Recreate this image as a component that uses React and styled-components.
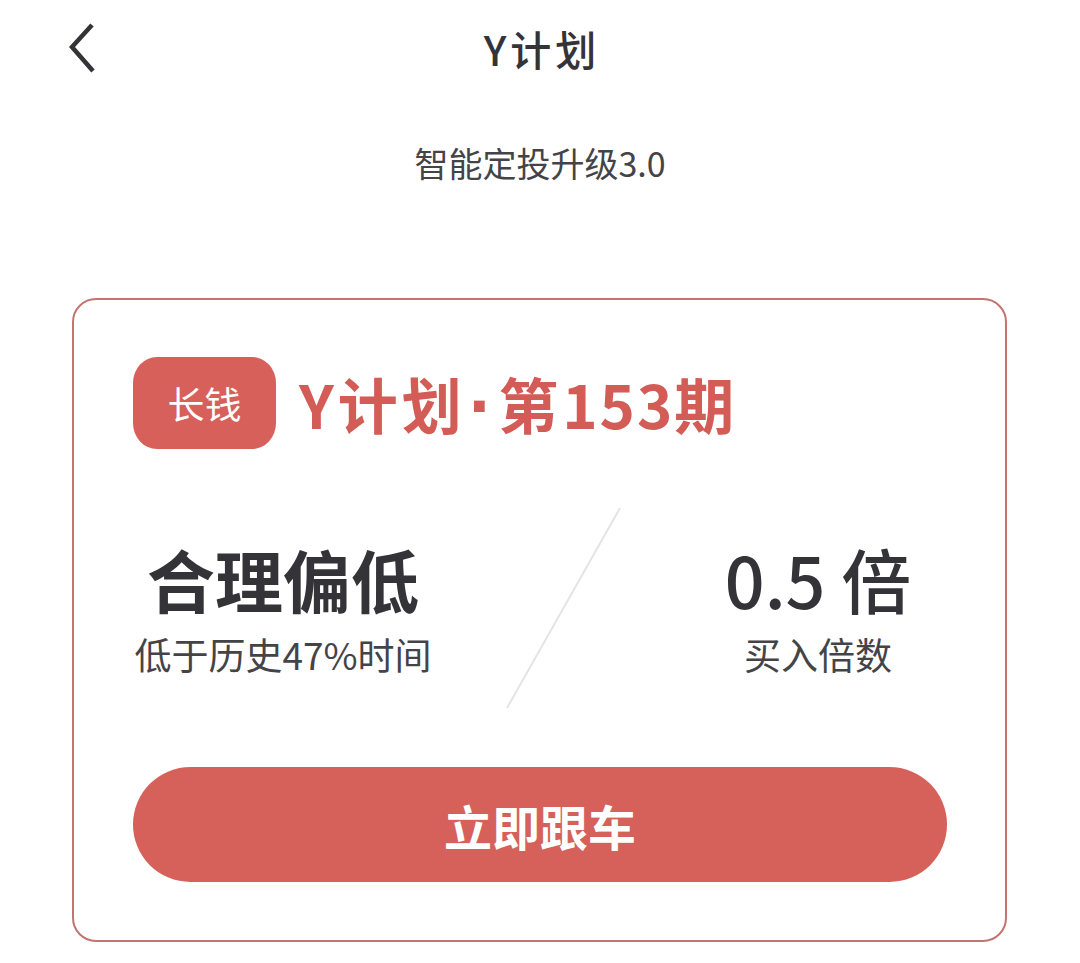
import React from "react";
import styled, { createGlobalStyle } from "styled-components";

const GlobalStyle = createGlobalStyle`
  html, body { margin: 0; padding: 0; background: #ffffff; }
  body {
    font-family: "Noto Sans CJK SC", "Noto Sans", "Liberation Sans", sans-serif;
    -webkit-font-smoothing: antialiased;
  }
  * { box-sizing: border-box; }
`;

const Page = styled.div`
  width: 1080px;
  min-height: 963px;
  background: #fff;
`;

const NavBar = styled.header`
  height: 96px;
  display: grid;
  grid-template-columns: 1fr auto 1fr;
  align-items: center;
`;

const BackButton = styled.button`
  justify-self: start;
  margin-left: 68px;
  padding: 0;
  border: none;
  background: transparent;
  width: 30px;
  height: 54px;
  display: flex;
  align-items: center;
  justify-content: center;
`;

const NavTitle = styled.h1`
  margin: 0;
  font-size: 41px;
  line-height: 56px;
  font-weight: 500;
  color: #333338;
  letter-spacing: 4px;
  padding-left: 4px;
`;

const Subtitle = styled.p`
  margin: 45px 0 0;
  text-align: center;
  font-size: 34px;
  line-height: 44px;
  color: #444448;
`;

const Card = styled.section`
  margin: 113px 0 0 72px;
  width: 935px;
  height: 644px;
  border: 2px solid #c47470;
  border-radius: 24px;
  padding: 57px 58px 58px 59px;
  display: flex;
  flex-direction: column;
`;

const CardHeader = styled.div`
  display: flex;
  align-items: center;
  gap: 23px;
  height: 92px;
`;

const Tag = styled.span`
  width: 143px;
  height: 92px;
  border-radius: 24px / 26px;
  background: #d8605b;
  color: #fff;
  font-size: 37px;
  line-height: 1;
  display: flex;
  align-items: center;
  justify-content: center;
`;

const CardTitle = styled.h2`
  margin: 0;
  font-size: 60px;
  line-height: 80px;
  font-weight: 700;
  color: #d45c57;
  letter-spacing: 4px;
  white-space: nowrap;
`;

const Dot = styled.span`
  font-family: "Liberation Sans", Arial, sans-serif;
  font-weight: 700;
  font-size: 76px;
  line-height: 0;
  margin-left: 3px;
  letter-spacing: 4px;
  position: relative;
  top: 3px;
`;

const Digits = styled.span`
  letter-spacing: 2px;
`;

const StatsRow = styled.div`
  margin-top: 59px;
  height: 200px;
  display: grid;
  grid-template-columns: 300px 1fr 200px;
  padding-right: 29px;
  align-items: center;
`;

const Stat = styled.div`
  display: flex;
  flex-direction: column;
  align-items: center;
  white-space: nowrap;
`;

const StatValue = styled.div`
  font-size: ${(p) => p.$size || 68}px;
  line-height: 76px;
  font-weight: ${(p) => p.$weight || 700};
  color: #333338;
`;

const StatLabel = styled.div`
  margin-top: 15px;
  font-size: 37px;
  line-height: 44px;
  color: #444448;
`;

const Divider = styled.svg`
  width: 100%;
  height: 200px;
  display: block;
`;

const ActionButton = styled.button`
  margin-top: 59px;
  height: 115px;
  width: 100%;
  border: none;
  border-radius: 58px;
  background: #d6605a;
  color: #fff;
  font-family: inherit;
  font-size: 48px;
  font-weight: 700;
  letter-spacing: 0;
`;

export default function App() {
  return (
    <Page>
      <GlobalStyle />
      <NavBar>
        <BackButton aria-label="返回">
          <svg width="30" height="54" viewBox="0 0 30 54">
            <polyline
              points="24,4 4,26 25,50"
              fill="none"
              stroke="#333338"
              strokeWidth="4.5"
              strokeLinecap="butt"
              strokeLinejoin="miter"
            />
          </svg>
        </BackButton>
        <NavTitle>Y计划</NavTitle>
        <span />
      </NavBar>
      <Subtitle>智能定投升级3.0</Subtitle>
      <Card>
        <CardHeader>
          <Tag>长钱</Tag>
          <CardTitle>
            Y计划<Dot>·</Dot>第<Digits>153</Digits>期
          </CardTitle>
        </CardHeader>
        <StatsRow>
          <Stat>
            <StatValue>合理偏低</StatValue>
            <StatLabel>低于历史47%时间</StatLabel>
          </Stat>
          <Divider viewBox="0 0 285 200" preserveAspectRatio="none">
            <line x1="187" y1="0" x2="74" y2="200" stroke="#e4e4e6" strokeWidth="2" />
          </Divider>
          <Stat>
            <StatValue $size={70} $weight={500}>0.5 倍</StatValue>
            <StatLabel>买入倍数</StatLabel>
          </Stat>
        </StatsRow>
        <ActionButton>立即跟车</ActionButton>
      </Card>
    </Page>
  );
}
